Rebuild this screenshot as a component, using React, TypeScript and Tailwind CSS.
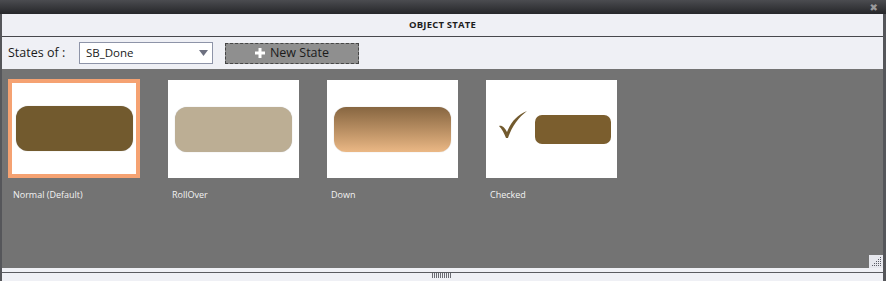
import React from 'react';

type StateItem = { name: string; kind: 'normal' | 'rollover' | 'down' | 'checked' };

const states: StateItem[] = [
    { name: 'Normal (Default)', kind: 'normal' },
    { name: 'RollOver', kind: 'rollover' },
    { name: 'Down', kind: 'down' },
    { name: 'Checked', kind: 'checked' },
];

const Preview: React.FC<{ kind: StateItem['kind'] }> = ({ kind }) => {
    if (kind === 'checked') {
        return (
            <div className="flex items-center h-full pl-[12px] pr-[5px] gap-[7px]">
                <svg width="30" height="28" viewBox="0 0 30 28" className="mb-[8px]" aria-hidden="true">
                    <path d="M1 15 C4 14 7 17 9 21 C13 11 19 4 29 0 C21 6 14 15 10 27 L8 27 C6 22 4 18 1 15 Z" fill="#725a2e" />
                </svg>
                <div className="w-[76px] h-[29px] rounded-[7px] bg-[#7b5e2e]" />
            </div>
        );
    }
    const fill =
        kind === 'normal'
            ? 'bg-[#725a2e]'
            : kind === 'rollover'
              ? 'bg-[#bcae94]'
              : 'bg-gradient-to-b from-[#876641] to-[#ebb885]';
    return (
        <div className="flex items-center justify-center h-full">
            <div className={`w-[117px] h-[45px] rounded-[12px] ${fill} shadow-[0_0_1px_rgba(0,0,0,0.3)]`} />
        </div>
    );
};

const StateCard: React.FC<{ item: StateItem; selected: boolean }> = ({ item, selected }) => (
    <div className="w-[132px] shrink-0">
        <div
            className={
                selected
                    ? 'w-[132px] h-[99px] border-[4px] border-[#f5a272] bg-white'
                    : 'w-[131px] h-[98px] mt-[1px] ml-[1px] bg-white'
            }
        >
            <Preview kind={item.kind} />
        </div>
        <div className="mt-[11px] pl-[5px] text-[9px] leading-[12px] text-[#f2f2f2]">{item.name}</div>
    </div>
);

const App: React.FC = () => {
    return (
        <div
            className="w-[886px] h-[281px] flex flex-col bg-[#eff0f5] overflow-hidden select-none"
            style={{ fontFamily: '"Open Sans", "Noto Sans", "DejaVu Sans", sans-serif' }}
        >
            {/* window bar */}
            <div className="h-[14px] shrink-0 bg-gradient-to-b from-[#4b4c50] to-[#26272a] flex items-center justify-end pr-[8px]">
                <span className="text-[10px] leading-none font-bold text-[#9a9a9c]">✖</span>
            </div>

            <div className="flex-1 flex flex-col border-l-[2px] border-r-[3px] border-[#55565a]">
                {/* title */}
                <div className="h-[23px] shrink-0 flex items-center justify-center border-b border-[#47484c]">
                    <span className="text-[9.5px] font-bold tracking-[0.2px] text-[#1e1e1e]">OBJECT STATE</span>
                </div>

                {/* toolbar */}
                <div className="h-[32px] shrink-0 flex items-center pl-[6px]">
                    <span className="w-[71px] text-[12.5px] text-[#1a1a1a]">States of :</span>
                    <div className="w-[134px] h-[22px] bg-white border border-[#8e94a8] flex items-center justify-between pl-[6px] pr-[4px]">
                        <span className="text-[11.5px] text-[#1a1a1a]">SB_Done</span>
                        <svg width="9" height="6" viewBox="0 0 9 6" aria-hidden="true">
                            <path d="M0 0 H9 L4.5 6 Z" fill="#6d7080" />
                        </svg>
                    </div>
                    <button className="ml-[12px] w-[134px] h-[21px] bg-[#8f8f8f] border border-dashed border-[#454545] flex items-center justify-center gap-[5px]">
                        <svg width="10" height="10" viewBox="0 0 10 10" aria-hidden="true">
                            <path d="M3.5 0 H6.5 V3.5 H10 V6.5 H6.5 V10 H3.5 V6.5 H0 V3.5 H3.5 Z" fill="#ffffff" />
                        </svg>
                        <span className="text-[12.5px] text-[#1b1b1b]">New State</span>
                    </button>
                </div>

                {/* states area */}
                <div className="h-[199px] shrink-0 bg-[#737373] relative">
                    <div className="flex gap-[27px] pl-[6px] pt-[10px]">
                        {states.map((s, i) => (
                            <StateCard key={s.name} item={s} selected={i === 0} />
                        ))}
                    </div>
                    {/* resize grip */}
                    <div className="absolute right-0 bottom-0 w-[14px] h-[13px] bg-[#e7e8ee] flex items-end justify-end p-[1px]">
                        <svg width="10" height="10" viewBox="0 0 10 10" aria-hidden="true">
                            {[
                                [8, 0], [8, 2], [6, 2], [8, 4], [6, 4], [4, 4], [8, 6], [6, 6], [4, 6], [2, 6],
                                [8, 8], [6, 8], [4, 8], [2, 8], [0, 8],
                            ].map(([x, y]) => (
                                <rect key={`${x}-${y}`} x={x} y={y} width="1" height="1" fill="#5b5d66" />
                            ))}
                        </svg>
                    </div>
                </div>

                <div className="h-[4px] shrink-0" />
                <div className="h-[1px] shrink-0 bg-[#5a5b60]" />
                <div className="flex-1 flex justify-center">
                    <div className="flex gap-[1px] ml-[-3px] h-[5px]">
                        {Array.from({ length: 10 }).map((_, i) => (
                            <div key={i} className="w-[1px] h-[5px] bg-[#6a6b72]" />
                        ))}
                    </div>
                </div>
            </div>
        </div>
    );
};

export default App;
